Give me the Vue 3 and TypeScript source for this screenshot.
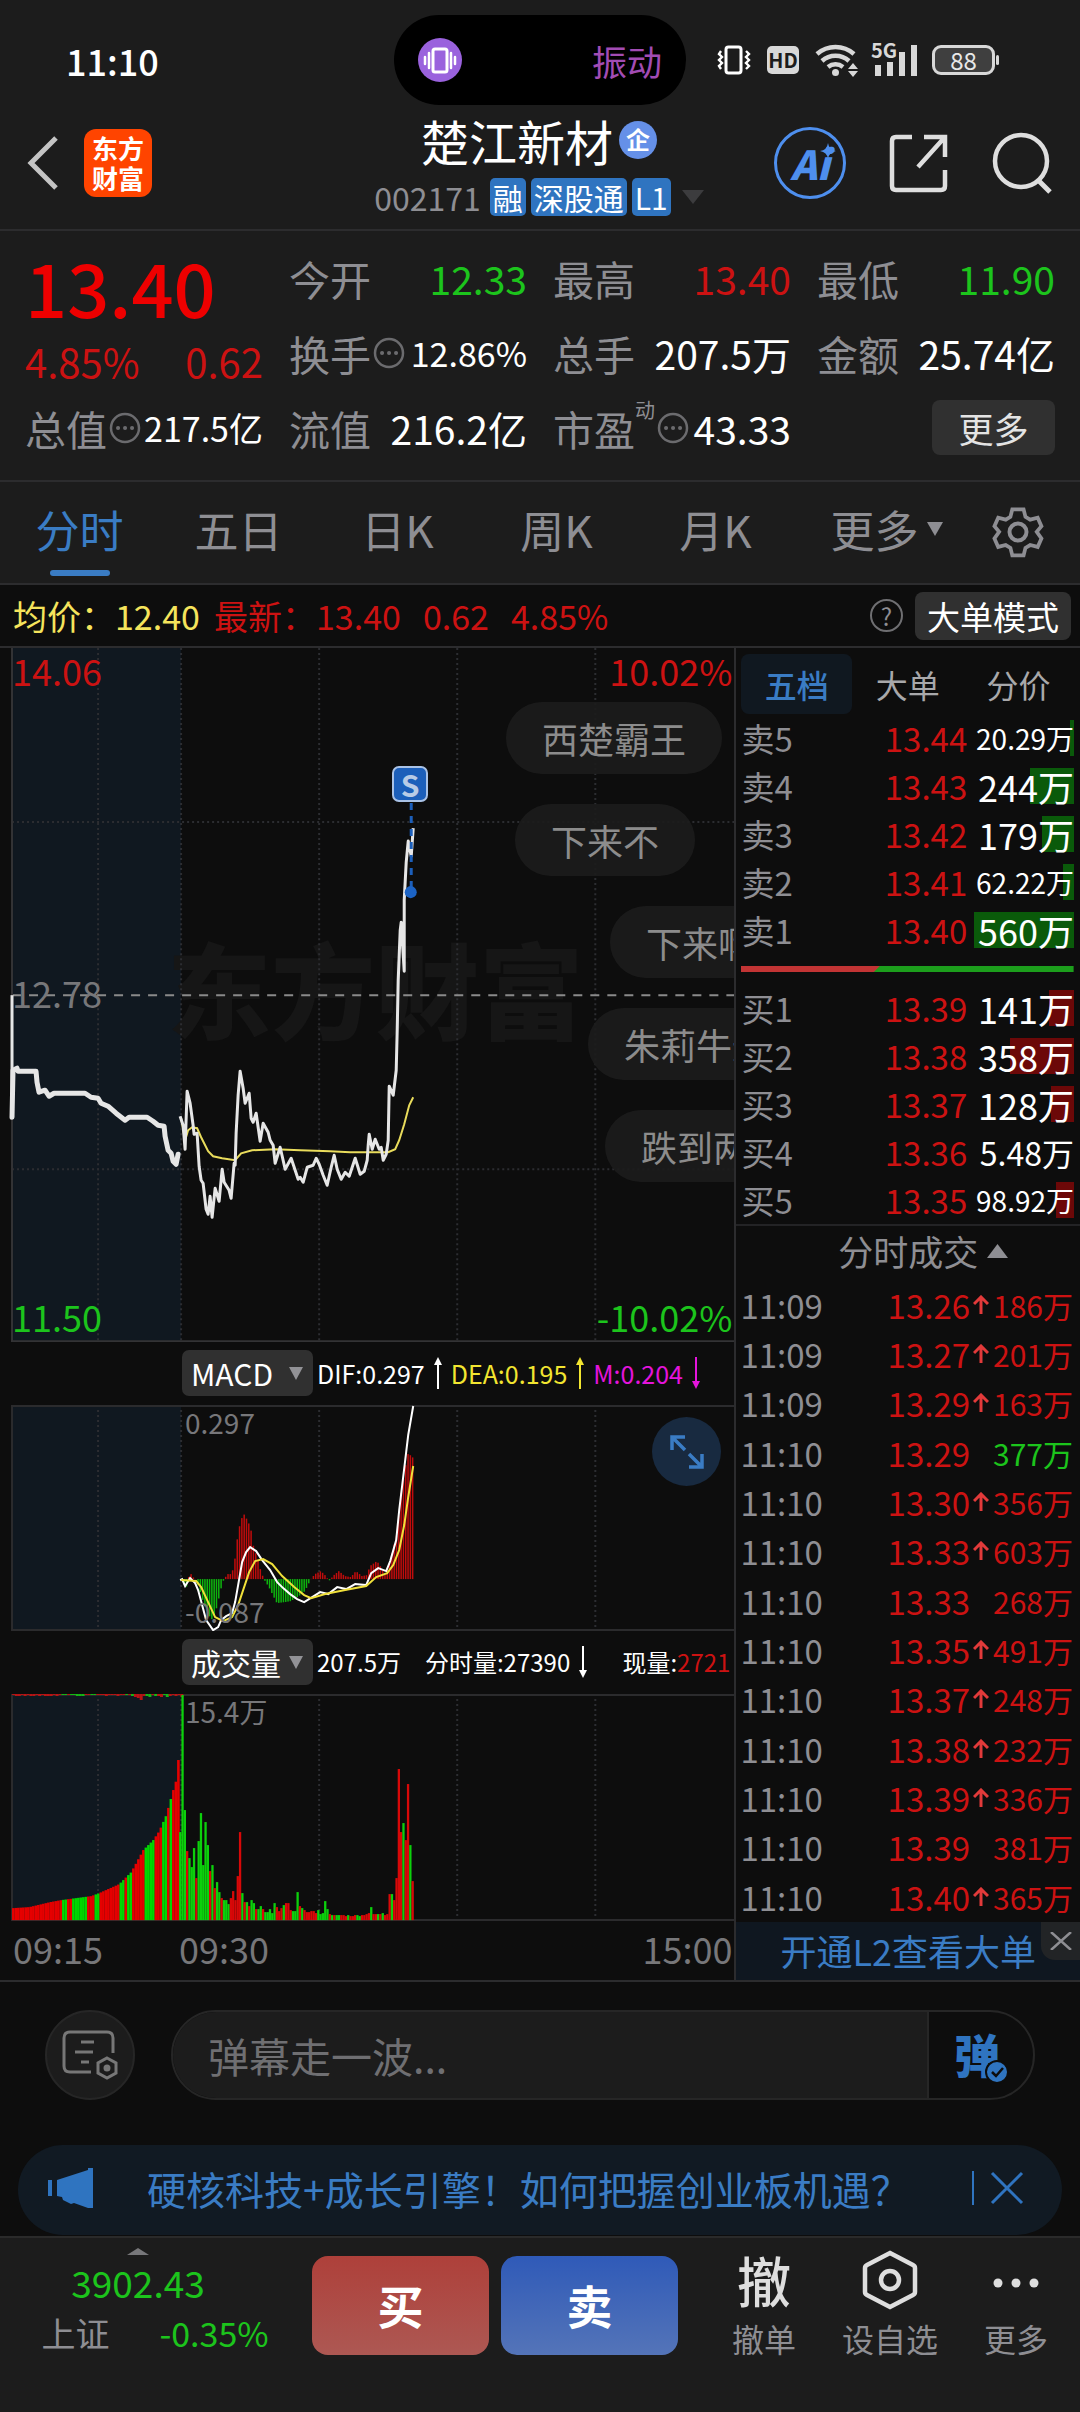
<script setup lang="ts">
import { ref } from 'vue'

type Tone = 'up' | 'down' | 'plain'

interface Quote {
  label: string
  value: string
  tone: Tone
  info?: boolean
  sup?: string
}

interface Level {
  name: string
  price: string
  volume: string
  amount: number
}

interface Trade {
  time: string
  price: string
  volume: string
  arrow: boolean
  tone: Tone
}

interface Bar {
  x: number
  y: number
  h: number
  up: boolean
}

const quotes: Quote[] = [
  { label: '今开', value: '12.33', tone: 'down' },
  { label: '最高', value: '13.40', tone: 'up' },
  { label: '最低', value: '11.90', tone: 'down' },
  { label: '换手', value: '12.86%', tone: 'plain', info: true },
  { label: '总手', value: '207.5万', tone: 'plain' },
  { label: '金额', value: '25.74亿', tone: 'plain' },
  { label: '总值', value: '217.5亿', tone: 'plain', info: true },
  { label: '流值', value: '216.2亿', tone: 'plain' },
  { label: '市盈', value: '43.33', tone: 'plain', info: true, sup: '动' },
]

const periods = ['分时', '五日', '日K', '周K', '月K']
const period = ref('分时')

const bookTabs = ['五档', '大单', '分价']
const bookTab = ref('五档')

const sells: Level[] = [
  { name: '卖5', price: '13.44', volume: '20.29万', amount: 20.29 },
  { name: '卖4', price: '13.43', volume: '244万', amount: 244 },
  { name: '卖3', price: '13.42', volume: '179万', amount: 179 },
  { name: '卖2', price: '13.41', volume: '62.22万', amount: 62.22 },
  { name: '卖1', price: '13.40', volume: '560万', amount: 560 },
]
const buys: Level[] = [
  { name: '买1', price: '13.39', volume: '141万', amount: 141 },
  { name: '买2', price: '13.38', volume: '358万', amount: 358 },
  { name: '买3', price: '13.37', volume: '128万', amount: 128 },
  { name: '买4', price: '13.36', volume: '5.48万', amount: 0 },
  { name: '买5', price: '13.35', volume: '98.92万', amount: 98.92 },
]
const maxAmount = 560
const depth = (l: Level) => ({ width: Math.round((l.amount / maxAmount) * 100) + '%' })
const volumeSize = (v: string) => (v.length > 5 ? 'vol-s' : v.length > 4 ? 'vol-m' : 'vol-l')

const trade = (time: string, price: string, volume: string, arrow = true, tone: Tone = 'up'): Trade => ({
  time,
  price,
  volume,
  arrow,
  tone,
})
const trades: Trade[] = [
  trade('11:09', '13.26', '186万'),
  trade('11:09', '13.27', '201万'),
  trade('11:09', '13.29', '163万'),
  trade('11:10', '13.29', '377万', false, 'down'),
  trade('11:10', '13.30', '356万'),
  trade('11:10', '13.33', '603万'),
  trade('11:10', '13.33', '268万', false),
  trade('11:10', '13.35', '491万'),
  trade('11:10', '13.37', '248万'),
  trade('11:10', '13.38', '232万'),
  trade('11:10', '13.39', '336万'),
  trade('11:10', '13.39', '381万', false),
  trade('11:10', '13.40', '365万'),
]

const gridX = [98, 181, 319, 457, 595]

const auctionLine =
  '12,469 13,422 17,420 18,423 36,423 37,434 39,444 45,442 49,448 54,445 85,445 91,449 98,450 101,455 108,458 116,465 125,472 129,469 147,469 153,473 158,477 164,478 165,488 168,502 171,505 173,513 176,516 178,506'
const priceLine =
  '180,468 183,477 185,501 187,443 190,455 193,477 194,486 197,485 199,518 201,532 203,535 206,561 208,566 210,548 212,569 215,540 219,553 222,521 224,534 229,542 231,550 234,515 235,517 236,485 238,447 240,423 243,440 245,455 249,445 251,470 253,474 256,465 260,493 263,475 268,484 270,492 273,497 275,515 280,499 285,521 291,510 298,531 300,529 303,534 307,519 313,517 316,510 319,516 323,527 327,537 331,519 334,507 337,521 341,531 345,524 349,528 355,510 360,526 364,523 367,512 368,497 369,486 372,501 375,491 379,501 381,499 383,512 386,506 388,492 389,438 393,447 396,422 397,382 398,332 400,282 401,274 404,323 404,252 406,214 408,193 411,208 413,180'
const averageLine =
  '181,470 185,492 188,482 192,479 197,480 201,489 208,503 213,508 222,510 235,512 241,505 252,502 275,501 300,502 330,503 350,504 388,504 395,501 399,492 404,476 409,457 413,449'

const difLine =
  '180,175 182,174 185,181 190,173 195,178 198,185 202,200 206,215 213,225 218,222 221,215 226,211 232,208 235,197 238,180 242,157 246,147 250,142 256,146 262,155 270,165 277,177 283,183 290,189 297,194 304,197 312,192 320,187 328,189 337,182 346,184 355,179 366,180 371,168 378,163 386,166 390,156 396,135 399,105 402,80 405,55 408,30 413,1'
const deaLine =
  '181,175 196,176 201,182 208,197 215,212 223,216 232,212 238,200 243,185 249,167 255,156 263,154 272,159 282,171 294,182 304,190 311,193 325,189 345,185 366,181 376,172 387,168 393,160 399,145 404,120 408,92 413,61'

/** Linear interpolation over [x, value] knots. */
function sample(knots: number[][], x: number): number {
  for (let i = 1; i < knots.length; i++) {
    const [x0, v0] = knots[i - 1]
    const [x1, v1] = knots[i]
    if (x <= x1) return v0 + ((v1 - v0) * (x - x0)) / (x1 - x0)
  }
  return knots[knots.length - 1][1]
}

const minute = 233 / 101

const macdKnots = [
  [181, 0], [185, -10], [187, -2], [189, 7], [192, 2], [195, 0], [198, -8], [203, -25], [210, -40], [212, -40],
  [216, -28], [220, -10], [223, 0], [227, 5], [231, 5], [234, 20], [237, 45], [240, 59], [243, 65], [247, 58],
  [250, 50], [252, 35], [256, 22], [260, 8], [263, 0], [268, -8], [276, -24], [284, -23], [290, -22], [298, -17],
  [304, -12], [310, 0], [314, 5], [320, 8], [325, 3], [328, -2], [333, 4], [338, 8], [344, 3], [350, 2],
  [355, 8], [361, 3], [366, 4], [369, 13], [376, 18], [380, 12], [384, 4], [388, 14], [392, 30], [396, 45],
  [400, 85], [404, 110], [407, 125], [411, 123], [413, 119],
]
const macdBars: Bar[] = Array.from({ length: 101 }, (_, i) => {
  const x = 181 + i * minute
  const v = sample(macdKnots, x)
  return { x, y: v > 0 ? 174 - v : 174, h: Math.abs(v), up: v > 0 }
})

const base = 226
const auctionKnots = [
  [12, 12], [28, 13], [49, 18], [60, 20], [90, 24], [98, 27], [118, 36], [130, 48], [142, 70], [152, 80],
  [158, 89], [165, 105], [172, 130], [175, 140], [178, 170],
]
const auctionGreen = [[60, 67], [70, 85], [93, 99], [118, 124], [126, 131], [143, 153], [161, 166], [168, 171]]
const auctionBars: Bar[] = Array.from({ length: 67 }, (_, i) => {
  const x = 12 + i * 2.5
  const h = sample(auctionKnots, x)
  return { x, y: base - h, h, up: !auctionGreen.some(([a, b]) => x >= a && x < b) }
})
const unmatched = [
  1, 2, 2, 1, 2, 1, 2, 2, 1, 2, 1, 2, 2, 2, 1, 2, 1, -1, -1, 1, -1, -1, -2, -2, -2, 1, 1, -1, -1, 1, 1, 1, 2, 1, 1, 1, 2,
  1, 1, -1, 1, -2, 3, 4, 6, 2, -2, -3, 1, -2, 2, 3, -1, -3, 2, 1, 2, 1, 3,
]

const volumes =
  '88G 225G 110G 69R 62G 53G 72G 42R 79G 107G 55G 98G 75G 49R 55G 32R 38G 28G 22R 20G 20G 16G 22R 29R 20R 44R 88R 27G 18R 18G 14R 20G 17G 11R 11G 14G 11R 8G 8G 11G 7G 17G 13R 9R 12R 15G 17R 17R 10R 9G 9G 28G 14R 12G 10R 8R 8R 9R 9R 7R 10G 6G 7G 19G 11G 6R 5G 5R 5G 5G 5R 5R 4R 5G 4R 4R 5R 5G 4G 5R 5R 6R 7R 13G 6R 6R 6G 6R 7G 5R 6R 26R 26G 20R 42R 151R 88R 97G 80R 136R 75G 39R'
const volumeBars: Bar[] = volumes.split(' ').map((v, i) => {
  const h = parseInt(v)
  return { x: 179 + i * 2.3, y: base - h, h, up: v.endsWith('R') }
})

const bullets = [
  { text: '西楚霸王', left: 506, top: 54 },
  { text: '下来不', left: 515, top: 156 },
  { text: '下来啊', left: 610, top: 258 },
  { text: '朱莉牛逼', left: 588, top: 360 },
  { text: '跌到两点', left: 605, top: 462 },
]

const indicator = ref('MACD')
const volumeIndicator = ref('成交量')
const comment = ref('')
</script>

<template>
  <div class="app">
    <div class="status">
      <span class="clock">11:10</span>
      <div class="island">
        <svg width="44" height="44" viewBox="0 0 44 44" aria-hidden="true">
          <circle cx="22" cy="22" r="22" fill="#9a62dd" />
          <rect x="15" y="11" width="14" height="23" rx="2" fill="none" stroke="#fff" stroke-width="3" />
          <path d="M11 15v15M33 15v15M7 19v7M37 19v7" stroke="#fff" stroke-width="2.5" stroke-linecap="round" />
        </svg>
        <span>振动</span>
      </div>
      <div class="signals">
        <svg width="34" height="32" viewBox="0 0 34 32" aria-hidden="true" fill="none" stroke="#fff">
          <rect x="9" y="3" width="15" height="26" rx="2.5" stroke-width="3" />
          <path d="M4 7l-2 3 3 3-3 3 3 3-3 3 2 3M29 7l3 3-3 3 3 3-3 3 3 3-3 3" stroke-width="2.4" />
        </svg>
        <span class="hd">HD</span>
        <svg width="44" height="34" viewBox="0 0 44 34" aria-hidden="true">
          <g fill="none" stroke="#d8d8d8" stroke-width="4.5">
            <path d="M2 11a28 28 0 0 1 37 0" />
            <path d="M7 18a20 20 0 0 1 27 0" />
            <path d="M13 24a12 12 0 0 1 15 0" />
          </g>
          <circle cx="20.500" cy="29.500" r="3.500" fill="#d8d8d8" />
          <path d="M33 26l5-6 5 6zM33 28l5 6 5-6z" fill="#d8d8d8" />
        </svg>
        <span class="cell">
          <b>5G</b>
          <svg width="46" height="34" viewBox="0 0 46 34" aria-hidden="true">
            <path d="M6 22v11M18 18v15M30 9v24M42 2v31" stroke="#d8d8d8" stroke-width="6" />
          </svg>
        </span>
        <span class="battery">88</span>
      </div>
    </div>

    <header class="header">
      <div class="side">
        <button class="icon" aria-label="返回">
          <svg width="34" height="56" viewBox="0 0 34 56"><path d="M30 3L5 28l25 25" fill="none" stroke="#c4c4c4" stroke-width="5" /></svg>
        </button>
        <div class="logo">东方<br />财富</div>
      </div>
      <div class="title">
        <h1>楚江新材<span class="corp">企</span></h1>
        <div class="code">
          <span>002171</span><i>融</i><i>深股通</i><i>L1</i>
          <svg width="22" height="14" viewBox="0 0 22 14"><path d="M0 0h22L11 14z" fill="#3c3c3e" /></svg>
        </div>
      </div>
      <div class="side actions">
        <button class="icon ai" aria-label="Ai">
          <span>Ai</span>
          <svg class="spark" width="16" height="16" viewBox="0 0 16 16"><path d="M8 0q1 7 8 8-7 1-8 8-1-7-8-8 7-1 8-8z" fill="#4e8fee" /></svg>
        </button>
        <button class="icon" aria-label="分享">
          <svg width="60" height="60" viewBox="0 0 60 60" fill="none" stroke="#dedede" stroke-width="4.500">
            <path d="M23 4H7q-4 0-4 4v45q0 4 4 4h45q4 0 4-4V37M35 4h21v20M56 4L29 34" />
          </svg>
        </button>
        <button class="icon" aria-label="搜索">
          <svg width="60" height="62" viewBox="0 0 60 62" fill="none" stroke="#dedede" stroke-width="4.500">
            <circle cx="29" cy="29" r="26" /><path d="M46 48l12 12" stroke-width="5" />
          </svg>
        </button>
      </div>
    </header>

    <section class="quote">
      <div class="last">
        <strong>13.40</strong>
        <div><span>4.85%</span><span>0.62</span></div>
      </div>
      <div v-for="q in quotes" :key="q.label" class="pair">
        <span class="label">{{ q.label }}<sup v-if="q.sup">{{ q.sup }}</sup></span>
        <svg v-if="q.info" class="dots" :class="{ after: q.sup }" width="32" height="32" viewBox="0 0 32 32" aria-hidden="true">
          <circle cx="16" cy="16" r="14" fill="none" stroke="#6b6b6e" stroke-width="2.500" />
          <path d="M9 16h.1M16 16h.1M23 16h.1" stroke="#6b6b6e" stroke-width="4" stroke-linecap="round" />
        </svg>
        <span class="value" :class="[q.tone, { tight: q.info && !q.sup }]">{{ q.value }}</span>
      </div>
      <button class="more">更多</button>
    </section>

    <nav class="periods">
      <button v-for="p in periods" :key="p" :class="{ on: p === period }" @click="period = p">{{ p }}</button>
      <button class="drop">更多<svg width="16" height="14" viewBox="0 0 16 14"><path d="M0 0h16L8 14z" fill="#8e8e93" /></svg></button>
      <button class="gear" aria-label="设置">
        <svg width="52" height="54" viewBox="0 0 52 54" fill="none" stroke="#8e8e93" stroke-width="4">
          <path d="M20 3h12l2 8 5 3 8-2 4 9-5 6 5 7-4 9-8-2-5 3-2 8H20l-2-8-5-3-8 2-4-9 5-7-5-6 4-9 8 2 5-3z" transform="translate(1.500 1.500) scale(.94)" />
          <circle cx="26" cy="27" r="8.500" />
        </svg>
      </button>
    </nav>

    <div class="summary">
      <span class="avg">均价：</span><span class="avg num">12.40</span>
      <span class="up new">最新：</span><span class="up num">13.40</span><span class="up num">0.62</span><span class="up num">4.85%</span>
      <button class="help" aria-label="帮助">?</button>
      <button class="mode">大单模式</button>
    </div>

    <main class="board">
      <section class="charts">
        <div class="panel">
          <svg class="plot" viewBox="0 0 734 694">
            <rect x="12" y="0" width="169" height="693" fill="#101820" />
            <text x="375" y="384" class="ghost" text-anchor="middle">东方财富</text>
            <g stroke="#2c2d31" stroke-width="2" stroke-dasharray="2 3">
              <path v-for="x in gridX" :key="x" :d="`M${x} 0V693`" />
              <path d="M12 174H734M12 521H734" />
            </g>
            <path d="M12 347H734" stroke="#8a8a8a" stroke-width="2" stroke-dasharray="9 8" />
            <path d="M12 0V693H734" fill="none" stroke="#333335" stroke-width="2" />
            <polyline :points="averageLine" fill="none" stroke="#e9dc5c" stroke-width="2" />
            <path d="M12 347V469" stroke="#e6e6e6" stroke-width="3" />
            <polyline :points="auctionLine" fill="none" stroke="#e6e6e6" stroke-width="5" stroke-linejoin="round" stroke-linecap="round" />
            <polyline :points="priceLine" fill="none" stroke="#e6e6e6" stroke-width="3" stroke-linejoin="round" />
            <path d="M411 155V244" stroke="#1c5fba" stroke-width="3" stroke-dasharray="7 6" />
            <circle cx="410.500" cy="244" r="6" fill="#1c63c4" />
          </svg>
          <span class="tag tl up">14.06</span>
          <span class="tag tr up">10.02%</span>
          <span class="tag ml">12.78</span>
          <span class="tag bl down">11.50</span>
          <span class="tag br down">-10.02%</span>
          <span class="sell-mark">S</span>
          <span v-for="b in bullets" :key="b.text" class="bullet" :style="{ left: b.left + 'px', top: b.top + 'px' }">{{ b.text }}</span>
        </div>

        <div class="bar">
          <label class="pick">
            <select v-model="indicator" aria-label="指标"><option>MACD</option><option>KDJ</option></select>
            <svg width="14" height="13" viewBox="0 0 14 13"><path d="M0 0h14L7 13z" fill="#929296" /></svg>
          </label>
          <span class="dif">DIF:0.297</span>
          <svg width="10" height="32" viewBox="0 0 10 32"><path d="M5 32V4" stroke="#fff" stroke-width="2" /><path d="M1 8l4-8 4 8z" fill="#fff" /></svg>
          <span class="dea">DEA:0.195</span>
          <svg width="10" height="32" viewBox="0 0 10 32"><path d="M5 32V4" stroke="#f2e530" stroke-width="2" /><path d="M1 8l4-8 4 8z" fill="#f2e530" /></svg>
          <span class="mac">M:0.204</span>
          <svg width="10" height="32" viewBox="0 0 10 32"><path d="M5 0V28" stroke="#e414dc" stroke-width="2" /><path d="M1 24l4 8 4-8z" fill="#e414dc" /></svg>
        </div>

        <div class="panel">
          <svg class="plot" viewBox="0 0 734 226">
            <rect x="12" y="0" width="169" height="225" fill="#101820" />
            <g stroke="#2c2d31" stroke-width="2" stroke-dasharray="2 3">
              <path v-for="x in gridX" :key="x" :d="`M${x} 0V225`" />
            </g>
            <path d="M12 1H734M12 0V225H734" fill="none" stroke="#2b2b2d" stroke-width="2" />
            <rect v-for="b in macdBars" :key="b.x" :x="b.x" :y="b.y" width="1.500" :height="b.h" :fill="b.up ? '#c00c0c' : '#0eb40e'" />
            <polyline :points="difLine" fill="none" stroke="#fff" stroke-width="2" />
            <polyline :points="deaLine" fill="none" stroke="#f0e03a" stroke-width="2" />
          </svg>
          <span class="note nt">0.297</span>
          <span class="note nb">-0.087</span>
          <button class="expand" aria-label="放大">
            <svg width="34" height="34" viewBox="0 0 34 34" fill="none" stroke="#3a7cc4" stroke-width="3.500">
              <path d="M2 15V2h13M2 2l13 13M32 19v13H19M32 32L19 19" />
            </svg>
          </button>
        </div>

        <div class="bar volume-bar">
          <label class="pick">
            <select v-model="volumeIndicator" aria-label="副图指标"><option>成交量</option><option>成交额</option></select>
            <svg width="14" height="13" viewBox="0 0 14 13"><path d="M0 0h14L7 13z" fill="#929296" /></svg>
          </label>
          <span class="total">207.5万</span>
          <span>分时量:27390</span>
          <svg class="fall" width="10" height="32" viewBox="0 0 10 32"><path d="M5 0V28" stroke="#fff" stroke-width="2" /><path d="M1 24l4 8 4-8z" fill="#fff" /></svg>
          <span class="now">现量:<span class="up">2721</span></span>
        </div>

        <div class="panel">
          <svg class="plot" viewBox="0 0 734 227">
            <rect x="12" y="0" width="169" height="226" fill="#101820" />
            <g stroke="#2c2d31" stroke-width="2" stroke-dasharray="2 3">
              <path v-for="x in gridX" :key="x" :d="`M${x} 0V226`" />
            </g>
            <path d="M12 1H734M12 0V226H734" fill="none" stroke="#2b2b2d" stroke-width="2" />
            <rect v-for="(u, i) in unmatched" :key="i" :x="12 + i * 2.9" y="0" width="3" :height="Math.abs(u)" :fill="u > 0 ? '#b81414' : '#14b814'" />
            <rect v-for="b in auctionBars" :key="'a' + b.x" :x="b.x" :y="b.y" width="2.600" :height="b.h" :fill="b.up ? '#e60000' : '#00d800'" />
            <rect v-for="b in volumeBars" :key="'v' + b.x" :x="b.x" :y="b.y" width="2.300" :height="b.h" :fill="b.up ? '#d80808' : '#0cd00c'" />
          </svg>
          <span class="note vt">15.4万</span>
        </div>
        <div class="axis"><span>09:15</span><span class="open">09:30</span><span class="close">15:00</span></div>
      </section>

      <aside class="book">
        <div class="book-tabs">
          <button v-for="t in bookTabs" :key="t" :class="{ on: t === bookTab }" @click="bookTab = t">{{ t }}</button>
        </div>
        <table class="levels sell">
          <tbody>
            <tr v-for="l in sells" :key="l.name">
              <th scope="row">{{ l.name }}</th>
              <td class="price up">{{ l.price }}</td>
              <td class="vol" :class="volumeSize(l.volume)"><i :style="depth(l)"></i><span>{{ l.volume }}</span></td>
            </tr>
          </tbody>
        </table>
        <svg class="ratio" viewBox="0 0 333 6" preserveAspectRatio="none" aria-hidden="true">
          <path d="M0 0h333v6H0z" fill="#1c9e1c" /><path d="M0 0h139l-6 6H0z" fill="#c23434" />
        </svg>
        <table class="levels buy">
          <tbody>
            <tr v-for="l in buys" :key="l.name">
              <th scope="row">{{ l.name }}</th>
              <td class="price up">{{ l.price }}</td>
              <td class="vol" :class="volumeSize(l.volume)"><i :style="depth(l)"></i><span>{{ l.volume }}</span></td>
            </tr>
          </tbody>
        </table>
        <button class="deals">分时成交<svg width="21" height="14" viewBox="0 0 21 14"><path d="M10.500 0L21 14H0z" fill="#8e8e93" /></svg></button>
        <div class="tape">
          <table>
            <tbody>
              <tr v-for="(t, i) in trades" :key="i">
                <th scope="row">{{ t.time }}</th>
                <td class="price up">{{ t.price }}</td>
                <td class="arrow">
                  <svg v-if="t.arrow" width="16" height="20" viewBox="0 0 16 20"><path d="M8 19V3M1 9l7-7 7 7" fill="none" stroke="#e23a3a" stroke-width="3" /></svg>
                </td>
                <td class="amount" :class="t.tone">{{ t.volume }}</td>
              </tr>
            </tbody>
          </table>
        </div>
        <div class="level2">
          <a href="#l2">开通L2查看大单</a>
          <button aria-label="关闭"><svg width="24" height="18" viewBox="0 0 24 18"><path d="M2 0l20 18M22 0L2 18" stroke="#8e8e93" stroke-width="2.500" /></svg></button>
        </div>
      </aside>
    </main>

    <form class="chat" @submit.prevent>
      <button type="button" class="round" aria-label="弹幕设置">
        <svg width="56" height="52" viewBox="0 0 56 52" fill="none" stroke="#777" stroke-width="3">
          <path d="M29 43H8q-6 0-6-6V9q0-6 6-6h37q6 0 6 6v15M19 13h13M13 23h18M19 33h8" />
          <path d="M45 29l9 5v10l-9 5-9-5V34z" /><circle cx="45" cy="39" r="2" fill="#777" />
        </svg>
      </button>
      <div class="field">
        <input v-model="comment" type="text" placeholder="弹幕走一波..." aria-label="弹幕" />
        <button type="button" class="toggle" aria-label="弹幕开关">
          弹
          <svg width="24" height="24" viewBox="0 0 24 24"><circle cx="12" cy="12" r="11" fill="#2f74c0" stroke="#0d0d0d" stroke-width="2" /><path d="M7 12l4 4 7-8" fill="none" stroke="#0d0d0d" stroke-width="2.500" /></svg>
        </button>
      </div>
    </form>

    <div class="notice">
      <svg width="46" height="40" viewBox="0 0 46 40" aria-hidden="true"><path d="M0 12h4v16H0zM9 12L40 2V0h5v40h-5l-14-5-3 1-8-4-1-3-5-1z" fill="#2f74c0" /></svg>
      <a href="#news">硬核科技+成长引擎！如何把握创业板机遇？</a>
      <button aria-label="关闭"><svg width="34" height="34" viewBox="0 0 34 34"><path d="M2 2l30 30M32 2L2 32" stroke="#2f74c0" stroke-width="3" /></svg></button>
    </div>

    <footer class="footer">
      <div class="index">
        <svg width="22" height="7" viewBox="0 0 22 7"><path d="M11 0l11 7H0z" fill="#77777a" /></svg>
        <strong>3902.43</strong>
        <div><span>上证</span><span class="down">-0.35%</span></div>
      </div>
      <button class="trade buy-btn">买</button>
      <button class="trade sell-btn">卖</button>
      <div class="tools">
        <button><span class="glyph">撤</span>撤单</button>
        <button>
          <svg width="56" height="60" viewBox="0 0 56 60" fill="none" stroke="#dedede" stroke-width="4.500">
            <path d="M28 3l23 12q2 1 2 3v24q0 2-2 3L28 57 5 45q-2-1-2-3V18q0-2 2-3z" /><circle cx="28" cy="30" r="9" />
          </svg>设自选
        </button>
        <button>
          <svg width="56" height="60" viewBox="0 0 56 60"><g fill="#dedede"><circle cx="10" cy="33" r="4.500" /><circle cx="28" cy="33" r="4.500" /><circle cx="46" cy="33" r="4.500" /></g></svg>更多
        </button>
      </div>
    </footer>
  </div>
</template>

<style>
body {
  background: #1c1c1c;
}
</style>

<style scoped>
.app {
  font-family: 'Noto Sans CJK SC', 'Noto Sans', sans-serif;
  color: #fff;
  background: #1c1c1c;
  min-height: 100vh;
  overflow: hidden;
}
.app *,
.app *::before {
  box-sizing: border-box;
}
button,
input,
select {
  font: inherit;
  color: inherit;
  background: none;
  border: 0;
  padding: 0;
  margin: 0;
  white-space: nowrap;
}
a {
  text-decoration: none;
}
i {
  font-style: normal;
}
svg {
  display: block;
  flex: none;
}
.up {
  color: #cc1212;
}
.down {
  color: #1cc41c;
}
.plain {
  color: #fff;
}

/* status bar */
.status {
  display: grid;
  grid-template-columns: 1fr 292px 1fr;
  align-items: center;
  height: 105px;
  padding-top: 15px;
}
.clock {
  padding-left: 66px;
  font-size: 36px;
  font-weight: 500;
}
.island {
  display: flex;
  align-items: center;
  justify-content: space-between;
  height: 90px;
  padding: 0 24px;
  border-radius: 45px;
  background: #000;
  color: #a24cb4;
  font-size: 35px;
}
.signals {
  display: flex;
  align-items: center;
  gap: 16px;
  padding-left: 31px;
}
.hd {
  width: 32px;
  border-radius: 5px;
  background: #d8d8d8;
  color: #1c1c1c;
  font-size: 20px;
  font-weight: 700;
  line-height: 28px;
  text-align: center;
}
.cell {
  position: relative;
  margin: 0 -2px 0 -3px;
}
.cell b {
  position: absolute;
  top: -5px;
  left: -1px;
  color: #d8d8d8;
  background: #1c1c1c;
  font-size: 20px;
  line-height: 24px;
}
.battery {
  position: relative;
  width: 63px;
  border: 3px solid #d8d8d8;
  border-radius: 9px;
  background: #3f3f3f;
  color: #e8e8e8;
  font-size: 24px;
  line-height: 24px;
  text-align: center;
}
.battery::before {
  content: '';
  position: absolute;
  right: -7px;
  top: 7px;
  width: 3px;
  height: 10px;
  border-radius: 2px;
  background: #d8d8d8;
}

/* header */
.header {
  display: grid;
  grid-template-columns: 1fr auto 1fr;
  align-items: center;
  height: 126px;
  padding: 0 28px 8px 26px;
  border-bottom: 2px solid #2c2c2e;
}
.side {
  display: flex;
  align-items: center;
  gap: 24px;
}
.logo {
  width: 68px;
  padding: 4px 0;
  border-radius: 12px;
  background: #ff4400;
  font-size: 26px;
  font-weight: 700;
  line-height: 30px;
  text-align: center;
}
.title {
  display: flex;
  flex-direction: column;
  align-items: center;
  gap: 8px;
}
h1 {
  display: flex;
  align-items: center;
  gap: 6px;
  margin: 0;
  font-size: 48px;
  font-weight: 400;
  line-height: 60px;
}
.corp {
  width: 38px;
  height: 38px;
  border-radius: 50%;
  background: #6590e8;
  font-size: 24px;
  font-weight: 700;
  line-height: 36px;
  text-align: center;
}
.code {
  display: flex;
  align-items: center;
  gap: 5px;
  color: #8e8e93;
  font-size: 32px;
  line-height: 38px;
}
.code span {
  margin-right: 4px;
}
.code i {
  padding: 0 3px;
  border-radius: 5px;
  background: #2f74c0;
  color: #fff;
  font-size: 30px;
}
.code svg {
  margin-left: 6px;
}
.actions {
  justify-content: flex-end;
  gap: 43px;
}
.ai {
  position: relative;
  width: 72px;
  height: 72px;
  border: 3px solid #4e8fee;
  border-radius: 50%;
  color: #4e8fee;
  font-size: 40px;
  font-weight: 900;
  font-style: italic;
  line-height: 64px;
}
.spark {
  position: absolute;
  top: 13px;
  right: 7px;
}

/* quote grid */
.quote {
  display: grid;
  grid-template-columns: repeat(4, 1fr);
  grid-auto-rows: 75px;
  column-gap: 26px;
  padding: 9px 25px 15px;
  border-bottom: 2px solid #2c2c2e;
}
.last {
  grid-row: span 2;
  color: #cc1212;
  font-size: 40px;
  line-height: 58px;
}
.last strong {
  display: block;
  color: #ee0000;
  font-size: 74px;
  font-weight: 500;
  line-height: 92px;
}
.last div {
  display: flex;
  justify-content: space-between;
}
.pair {
  display: flex;
  align-items: center;
  font-size: 39px;
  white-space: nowrap;
}
.label {
  position: relative;
  color: #8e8e93;
  font-size: 41px;
}
.label sup {
  position: absolute;
  left: 100%;
  top: 0;
  font-size: 20px;
  line-height: 24px;
}
.dots {
  margin-left: 2px;
}
.dots.after {
  margin-left: 22px;
}
.value {
  margin-left: auto;
}
.tight {
  font-size: 34px;
}
.more {
  align-self: center;
  justify-self: end;
  width: 123px;
  border-radius: 8px;
  background: #303030;
  color: #e4e4e4;
  font-size: 35px;
  line-height: 55px;
}

/* periods */
.periods {
  display: grid;
  grid-template-columns: repeat(6, 159fr) 126fr;
  height: 103px;
  color: #8e8e93;
  font-size: 44px;
  border-bottom: 2px solid #2c2c2e;
}
.periods button {
  position: relative;
  display: flex;
  align-items: center;
  justify-content: center;
  padding-bottom: 7px;
}
.periods .on {
  color: #3a7cc4;
}
.periods .on::before {
  content: '';
  position: absolute;
  bottom: 7px;
  width: 60px;
  height: 6px;
  border-radius: 3px;
  background: #3a7cc4;
}
.periods .drop {
  gap: 8px;
  padding-left: 24px;
}
.periods .gear {
  padding: 0 0 2px 2px;
}

/* summary */
.summary {
  display: flex;
  align-items: center;
  height: 63px;
  padding: 0 9px 0 13px;
  background: #0d0d0d;
  border-bottom: 2px solid #2c2c2e;
  font-size: 34px;
}
.avg {
  color: #f5e45c;
}
.new {
  margin-left: 14px;
}
.summary .num + .num {
  margin-left: 22px;
}
.help {
  width: 33px;
  height: 33px;
  margin: 0 12px 0 auto;
  border: 2px solid #6f6f72;
  border-radius: 50%;
  color: #8e8e93;
  font-size: 24px;
  line-height: 28px;
}
.mode {
  width: 156px;
  border-radius: 8px;
  background: #303030;
  font-size: 33px;
  line-height: 48px;
}

/* board */
.board {
  display: grid;
  grid-template-columns: 17fr 8fr;
  background: #0d0d0d;
  border-bottom: 2px solid #2c2c2e;
}
.charts {
  min-width: 0;
}
.panel {
  position: relative;
  overflow: hidden;
}
.plot {
  width: 100%;
  height: auto;
}
.ghost {
  fill: #161616;
  font-size: 104px;
  font-weight: 900;
}
.tag {
  position: absolute;
  font-size: 36px;
  line-height: 44px;
}
.tl {
  left: 12px;
  top: 0;
}
.tr {
  right: 2px;
  top: 0;
}
.ml {
  left: 12px;
  top: 322px;
  color: #77777a;
}
.bl {
  left: 12px;
  bottom: 4px;
}
.br {
  right: 2px;
  bottom: 4px;
}
.sell-mark {
  position: absolute;
  left: 392px;
  top: 118px;
  width: 36px;
  border: 2px solid #a9c2e6;
  border-radius: 7px;
  background: #1c5fba;
  color: #b8cbe6;
  font-size: 30px;
  font-weight: 700;
  line-height: 32px;
  text-align: center;
}
.bullet {
  position: absolute;
  padding: 0 36px;
  border-radius: 36px;
  background: #1c1c1cee;
  color: #8c8c8c;
  font-size: 36px;
  line-height: 72px;
  white-space: nowrap;
}
.bar {
  display: flex;
  align-items: center;
  height: 63px;
  padding: 0 0 2px 182px;
  font-size: 25px;
  white-space: nowrap;
  overflow: hidden;
}
.volume-bar {
  font-size: 24px;
}
.pick {
  position: relative;
  flex: none;
  margin-right: 4px;
}
.pick select {
  display: block;
  appearance: none;
  width: 131px;
  height: 46px;
  padding-left: 9px;
  border-radius: 7px;
  background: #303030;
  font-size: 30px;
}
.pick svg {
  position: absolute;
  right: 10px;
  top: 17px;
  pointer-events: none;
}
.bar > svg {
  margin-left: 8px;
  margin-right: 8px;
}
.dea {
  color: #f2e530;
}
.mac {
  color: #e414dc;
}
.total {
  margin-right: 24px;
}
.now {
  margin-left: auto;
  padding-right: 4px;
}
.note {
  position: absolute;
  left: 185px;
  color: #77777a;
  font-size: 28px;
  line-height: 34px;
}
.nt,
.vt {
  top: 0;
}
.nb {
  bottom: 3px;
}
.expand {
  position: absolute;
  right: 13px;
  top: 12px;
  display: grid;
  place-items: center;
  width: 69px;
  height: 69px;
  border-radius: 50%;
  background: #182a40;
}
.axis {
  display: flex;
  padding: 0 2px 6px 13px;
  color: #77777a;
  font-size: 36px;
  line-height: 52px;
}
.open {
  margin-left: 76px;
}
.close {
  margin-left: auto;
}

/* order book */
.book {
  display: flex;
  flex-direction: column;
  min-width: 0;
  border-left: 2px solid #2c2c2e;
}
.book-tabs {
  display: flex;
  padding: 6px 6px 0 5px;
}
.book-tabs button {
  flex: 1;
  border-radius: 8px;
  color: #a8a8aa;
  font-size: 32px;
  line-height: 60px;
}
.book-tabs .on {
  background: #101820;
  color: #3a7cc4;
  font-weight: 500;
}
table {
  border-collapse: collapse;
  table-layout: fixed;
}
th {
  padding: 0;
  color: #8e8e93;
  font-weight: 400;
  text-align: left;
  white-space: nowrap;
}
td {
  padding: 0;
  text-align: right;
  white-space: nowrap;
}
.levels {
  width: auto;
  margin: 0 6px 0 5px;
  font-size: 33px;
  line-height: 48px;
}
.levels th {
  width: 30%;
}
.levels .price {
  width: 40%;
  padding-right: 7px;
}
.vol {
  position: relative;
  width: 30%;
}
.vol i {
  position: absolute;
  right: 0;
  top: 6px;
  bottom: 6px;
  background: #0a5a0a;
}
.buy .vol i {
  background: #6c0808;
}
.vol span {
  position: relative;
}
.vol-l {
  font-size: 36px;
}
.vol-m {
  font-size: 32px;
}
.vol-s {
  font-size: 28px;
}
.ratio {
  height: 6px;
  margin: 12px 6px 12px 5px;
}
.deals {
  display: flex;
  align-items: center;
  justify-content: center;
  gap: 9px;
  padding: 0 0 4px 30px;
  border-top: 2px solid #232325;
  color: #8e8e93;
  font-size: 35px;
  line-height: 50px;
}
.tape {
  flex: 1;
  display: grid;
}
.tape table {
  width: 100%;
  font-size: 33px;
  line-height: 48px;
}
.tape th {
  width: 29%;
  padding-left: 4px;
}
.tape .price {
  width: 39%;
}
.arrow {
  width: 6%;
  padding-right: 2px;
}
.arrow svg {
  margin-left: auto;
}
.amount {
  padding-right: 7px;
  font-size: 30px;
}
.level2 {
  position: relative;
  flex: none;
  height: 58px;
  background: #0f1720;
  color: #3a7cc4;
  font-size: 36px;
  text-align: center;
  line-height: 56px;
}
.level2 a {
  color: inherit;
}
.level2 button {
  position: absolute;
  right: 0;
  top: 0;
  display: grid;
  place-items: center;
  width: 39px;
  height: 38px;
  border-bottom-left-radius: 14px;
  background: #222426;
}

/* comment */
.chat {
  display: flex;
  gap: 36px;
  padding: 28px 45px 45px;
  background: #0d0d0d;
}
.round {
  display: grid;
  place-items: center;
  flex: none;
  width: 90px;
  height: 90px;
  border: 2px solid #262626;
  border-radius: 50%;
  background: #1c1c1c;
}
.field {
  display: flex;
  flex: 1;
  min-width: 0;
  height: 90px;
  border: 2px solid #262626;
  border-radius: 45px;
  overflow: hidden;
}
.field input {
  flex: 1;
  min-width: 0;
  padding-left: 35px;
  background: #1c1c1c;
  font-size: 41px;
  outline: 0;
}
.field input::placeholder {
  color: #6f6f72;
  opacity: 1;
}
.toggle {
  position: relative;
  width: 106px;
  padding: 0 8px 4px 0;
  border-left: 2px solid #262626;
  color: #2f74c0;
  font-size: 46px;
  font-weight: 900;
}
.toggle svg {
  position: absolute;
  left: 56px;
  top: 48px;
}

/* notice */
.notice {
  position: relative;
  display: flex;
  align-items: center;
  height: 91px;
  padding: 0 56px 4px 48px;
  background: #0d0d0d;
  isolation: isolate;
}
.notice::before {
  content: '';
  position: absolute;
  inset: 0 18px 1px;
  z-index: -1;
  border-radius: 45px;
  background: #111a23;
}
.notice a {
  flex: 1;
  margin-left: 53px;
  color: #3a7cc4;
  font-size: 39px;
  white-space: nowrap;
}
.notice button {
  padding-left: 16px;
  border-left: 2px solid #2f74c0;
}

/* footer */
.footer {
  display: flex;
  align-items: flex-start;
  gap: 12px;
  padding: 10px 20px 0 0;
  border-top: 2px solid #2a2a2a;
}
.index {
  display: flex;
  flex-direction: column;
  align-items: center;
  width: 300px;
  padding-right: 24px;
}
.index strong {
  margin-top: 3px;
  color: #1cc41c;
  font-size: 37px;
  font-weight: 400;
  line-height: 48px;
}
.index div {
  display: flex;
  gap: 50px;
  color: #8e8e93;
  font-size: 34px;
  line-height: 54px;
  padding-left: 34px;
}
.index .down {
  color: #1cc41c;
}
.trade {
  flex: 0 1 177px;
  height: 99px;
  margin-top: 8px;
  padding-bottom: 3px;
  border-radius: 16px;
  font-size: 46px;
  font-weight: 700;
}
.buy-btn {
  background: linear-gradient(#ae403a, #ad5853);
}
.sell-btn {
  background: linear-gradient(#2f5ab8, #5474b8);
}
.tools {
  display: flex;
  flex: 1;
  justify-content: space-between;
  padding-left: 30px;
}
.tools button {
  display: flex;
  flex-direction: column;
  align-items: center;
  gap: 6px;
  min-width: 88px;
  color: #8e8e93;
  font-size: 32px;
  line-height: 44px;
}
.tools svg,
.glyph {
  margin-top: 2px;
}
.glyph {
  color: #dedede;
  font-size: 54px;
  font-weight: 500;
  line-height: 60px;
}
</style>
